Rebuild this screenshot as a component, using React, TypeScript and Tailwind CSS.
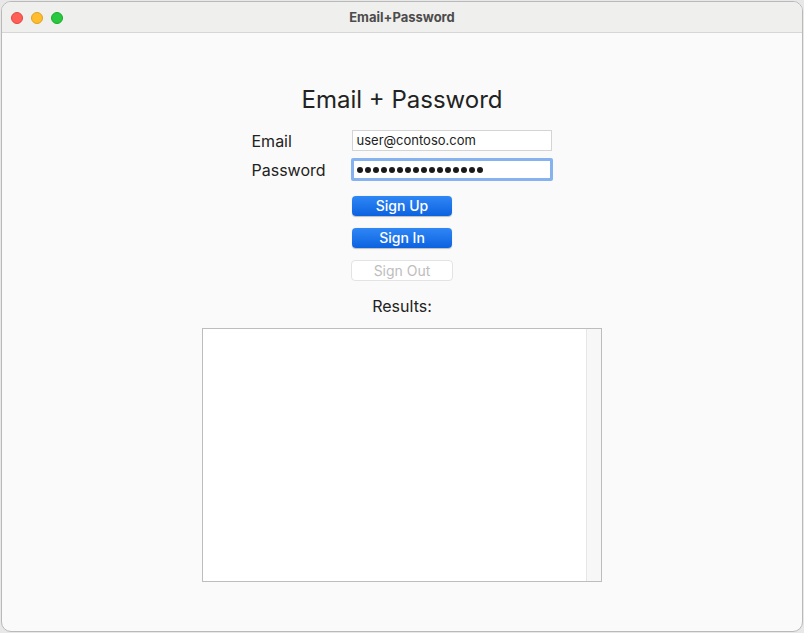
export default function App() {
  const dots = Array.from({ length: 16 });
  return (
    <div
      className="h-[633px] w-[804px] bg-[#e8e8e8] p-px"
      style={{ fontFamily: '"Inter", "Liberation Sans", sans-serif' }}
    >
      <div className="flex h-[631px] w-[802px] flex-col overflow-hidden rounded-[10px] border border-[#b9b9b9] bg-[#fafafa]">
        {/* title bar */}
        <div className="relative flex h-[31px] shrink-0 items-center justify-center border-b border-[#d6d6d6] bg-[#efefed] pt-[2px]">
          <div className="absolute left-[9px] top-[10px] flex gap-2">
            <span className="h-3 w-3 rounded-full border border-[#e2463f] bg-[#ff5f57]" />
            <span className="h-3 w-3 rounded-full border border-[#dea123] bg-[#febc2e]" />
            <span className="h-3 w-3 rounded-full border border-[#1aab29] bg-[#28c840]" />
          </div>
          <span className="text-[13px] font-bold text-[#4c4c4c]">Email+Password</span>
        </div>

        {/* content */}
        <div className="flex flex-col items-center pt-[52px]">
          <h1 className="text-[24px] leading-[30px] text-[#222]">Email + Password</h1>

          <div className="mt-[15px] flex flex-col gap-[7px]">
            <div className="flex items-center">
              <span className="w-[100px] text-[16px] leading-[20px] text-[#222]">Email</span>
              <div className="flex h-[21px] w-[200px] items-center border border-[#d4d4d4] bg-white px-[4px] text-[13px] text-[#222]">
                user@contoso.com
              </div>
            </div>
            <div className="flex items-center">
              <span className="w-[99px] text-[16px] leading-[20px] text-[#222]">Password</span>
              <div className="flex h-[23px] w-[202px] items-center gap-[2px] rounded-[2px] border-[3px] border-[#86b3f0] bg-white pl-[3px]">
                {dots.map((_, i) => (
                  <span key={i} className="h-[6px] w-[6px] rounded-full bg-[#1a1a1a]" />
                ))}
              </div>
            </div>
          </div>

          <div className="mt-[15px] flex flex-col gap-[12px] pl-px">
            <button className="h-[20px] w-[100px] rounded-[4px] bg-gradient-to-b from-[#2f87f5] to-[#0b62e0] text-[14px] font-medium leading-[20px] text-white shadow-[0_0.5px_1px_rgba(0,0,0,0.25)]">
              Sign Up
            </button>
            <button className="h-[20px] w-[100px] rounded-[4px] bg-gradient-to-b from-[#2f87f5] to-[#0b62e0] text-[14px] font-medium leading-[20px] text-white shadow-[0_0.5px_1px_rgba(0,0,0,0.25)]">
              Sign In
            </button>
            <button className="-ml-px h-[21px] w-[102px] rounded-[4px] border border-[#e3e3e3] bg-white text-[14px] leading-[19px] text-[#bdbdbd]">
              Sign Out
            </button>
          </div>

          <div className="mt-[15px] text-[16px] leading-[20px] text-[#222]">Results:</div>

          <div className="mt-[12px] flex h-[254px] w-[400px] border border-[#bdbdbd] bg-white">
            <div className="flex-1" />
            <div className="w-[15px] border-l border-[#e6e6e6] bg-[#f7f7f7]" />
          </div>
        </div>
      </div>
    </div>
  );
}
